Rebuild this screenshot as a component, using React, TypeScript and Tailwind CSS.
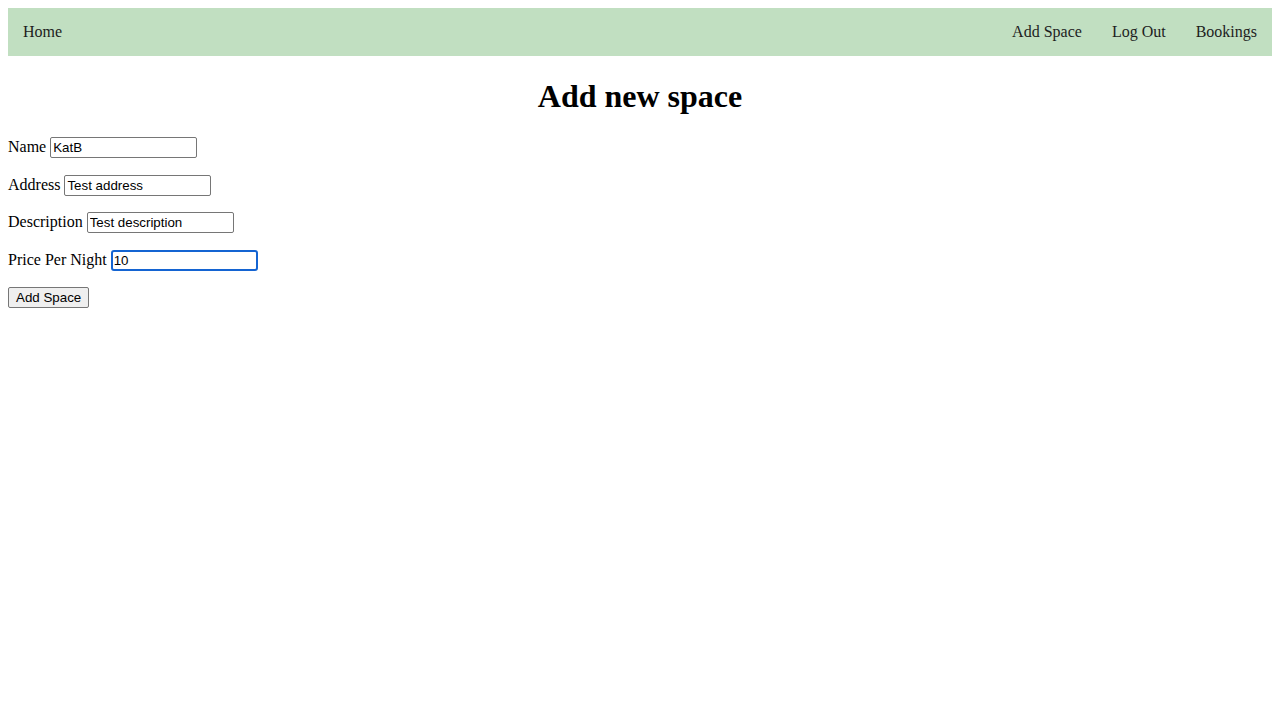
import React from "react";

export default function App() {
  const sans = { fontFamily: '"Liberation Sans", Arial, sans-serif' };
  const inputCls =
    "w-[147px] h-[21px] border border-[#767676] rounded-[2px] px-[2px] py-[1px] text-[13.33px] text-black bg-white";
  const rowCls = "flex items-baseline gap-[4px] h-[21.5px] my-[16px] leading-[18px]";
  return (
    <div className="bg-white min-h-[720px] p-[8px] text-black text-[16px]" style={{ fontFamily: '"Liberation Serif", "Times New Roman", serif' }}>
      <nav className="flex items-center bg-[#c1dfc1] text-[#1d1d1d] leading-[18px]">
        <a className="px-[15px] py-[15px]">Home</a>
        <div className="ml-auto flex">
          <a className="px-[15px] py-[15px]">Add Space</a>
          <a className="px-[15px] py-[15px]">Log Out</a>
          <a className="px-[15px] py-[15px]">Bookings</a>
        </div>
      </nav>
      <h1 className="text-center text-[32px] font-bold leading-[37px] mt-[22px] mb-[22px]">Add new space</h1>
      <form>
        <p className={rowCls}>
          <label>Name</label>
          <input className={inputCls} style={sans} defaultValue="KatB" readOnly />
        </p>
        <p className={rowCls}>
          <label>Address</label>
          <input className={inputCls} style={sans} defaultValue="Test address" readOnly />
        </p>
        <p className={rowCls}>
          <label>Description</label>
          <input className={inputCls} style={sans} defaultValue="Test description" readOnly />
        </p>
        <p className={rowCls}>
          <label>Price Per Night</label>
          <input
            className="w-[147px] h-[21px] border-2 border-[#1464d2] rounded-[3px] px-[1px] py-0 text-[13.33px] text-black bg-white"
            style={sans}
            defaultValue="10"
            readOnly
          />
        </p>
        <p className={rowCls}>
          <button
            type="button"
            className="h-[21px] px-[7px] border border-[#767676] rounded-[2px] bg-[#efefef] text-[13.33px] text-black"
            style={sans}
          >
            Add Space
          </button>
        </p>
      </form>
    </div>
  );
}
